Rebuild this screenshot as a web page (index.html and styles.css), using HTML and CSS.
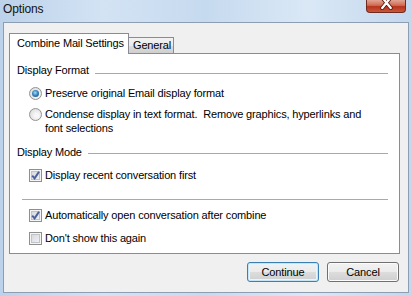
FILE: index.html
```html
<!DOCTYPE html>
<html lang="en">
<head>
  <meta charset="UTF-8" />
  <title>Options</title>
  <link rel="stylesheet" href="styles.css">
</head>
<body>
  <div class="window">
    <div class="titlebar">
      <span class="title">Options</span>
      <span class="close" title="Close">
        <svg width="40" height="13" viewBox="0 0 40 13" xmlns="http://www.w3.org/2000/svg">
          <path d="M16 -3L25 8M25 -3L16 8" stroke="#5a1a0e" stroke-width="4.2" stroke-linecap="round"/>
          <path d="M16 -3L25 8M25 -3L16 8" stroke="#ffffff" stroke-width="2.4" stroke-linecap="round"/>
        </svg>
      </span>
    </div>

    <div class="client">
      <div class="tabs">
        <div class="tab active">Combine Mail Settings</div>
        <div class="tab">General</div>
      </div>

      <div class="panel">
        <div class="group-head">
          <span>Display Format</span>
          <span class="rule"></span>
        </div>
        <label class="option gap-9">
          <span class="radio checked"><span class="dot"></span></span>
          <span>Preserve original Email display format</span>
        </label>
        <label class="option gap-7">
          <span class="radio"></span>
          <span>Condense display in text format.&nbsp; Remove graphics, hyperlinks and<br>font selections</span>
        </label>

        <div class="group-head gap-10">
          <span>Display Mode</span>
          <span class="rule"></span>
        </div>
        <label class="option gap-9">
          <span class="check">
            <svg width="11" height="11" viewBox="0 0 11 11"><path d="M2.2 5.6L4.6 8.4L9 1.8" fill="none" stroke="#4b5f9c" stroke-width="2"/></svg>
          </span>
          <span>Display recent conversation first</span>
        </label>

        <div class="separator"></div>

        <label class="option gap-8">
          <span class="check">
            <svg width="11" height="11" viewBox="0 0 11 11"><path d="M2.2 5.6L4.6 8.4L9 1.8" fill="none" stroke="#4b5f9c" stroke-width="2"/></svg>
          </span>
          <span>Automatically open conversation after combine</span>
        </label>
        <label class="option gap-9">
          <span class="check"></span>
          <span>Don't show this again</span>
        </label>
      </div>

      <div class="buttons">
        <button class="btn default">Continue</button>
        <button class="btn">Cancel</button>
      </div>
    </div>
  </div>
</body>
</html>
```

FILE: styles.css
```css
* {
  box-sizing: border-box;
  margin: 0;
  padding: 0;
}

body {
  font-family: 'Liberation Sans', Arial, sans-serif;
  font-size: 11px;
  letter-spacing: -0.15px;
  color: #000;
  background: #c4d8ee;
  white-space: nowrap;
}

.window {
  width: 411px;
  height: 296px;
  display: flex;
  flex-direction: column;
  background: linear-gradient(to right, #bcd2ea, #d3e3f4 25%, #c6daef 50%, #dae8f6 75%, #c3d7ed);
}

.titlebar {
  height: 22px;
  display: flex;
  justify-content: space-between;
  align-items: flex-start;
}

.title {
  padding: 2px 0 0 3px;
  font-size: 12px;
  line-height: 15px;
  color: #111;
}

.close {
  width: 40px;
  height: 13px;
  margin-right: 5px;
  display: flex;
  overflow: hidden;
  border: 1px solid #6e2a1e;
  border-top: none;
  border-radius: 0 0 4px 4px;
  background: linear-gradient(#e2a593, #cf6a52 45%, #b8331c 55%, #c8583a);
}

.client {
  height: 271px;
  margin: 0 2px 0 3px;
  border: 1px solid #8d9db2;
  background: #f0f0f0;
  padding: 10px 0 0 5px;
  display: flex;
  flex-direction: column;
}

/* tabs */
.tabs {
  display: flex;
  align-items: flex-end;
  margin-bottom: -1px;
}

.tab {
  position: relative;
  border: 1px solid #898c95;
  border-bottom: none;
}

.tab.active {
  z-index: 1;
  width: 120px;
  height: 21px;
  padding-left: 7px;
  line-height: 18px;
  background: #fff;
}

.tab:not(.active) {
  width: 46px;
  height: 16px;
  margin-left: -1px;
  margin-bottom: 1px;
  padding-left: 4px;
  line-height: 15px;
  background: linear-gradient(#f2f2f2, #ebebeb 50%, #dddddd 50%, #cfcfcf);
}

.panel {
  width: 391px;
  height: 201px;
  border: 1px solid #898c95;
  background: #fff;
  padding: 0 11px 0 7px;
  display: flex;
  flex-direction: column;
}

.group-head {
  display: flex;
  height: 14px;
  line-height: 14px;
  margin-top: 9px;
}

.group-head .rule {
  flex: 1;
  height: 1px;
  margin: 10px 0 0 6px;
  background: #a9a9a9;
}

.group-head.gap-10 { margin-top: 10px; }
.group-head.gap-10 .rule { margin-top: 8px; }

.option {
  display: flex;
  align-items: flex-start;
  gap: 3px;
  margin-left: 12px;
  line-height: 14px;
}

.gap-7 { margin-top: 7px; }
.gap-8 { margin-top: 8px; }
.gap-9 { margin-top: 9px; }

.radio {
  width: 13px;
  height: 13px;
  margin-top: 1px;
  flex-shrink: 0;
  border: 1px solid #929292;
  border-radius: 50%;
  background: radial-gradient(circle at 60% 60%, #f7f7f7 20%, #dcdcdc 80%, #cfcfcf);
  display: flex;
  align-items: center;
  justify-content: center;
}

.radio .dot {
  width: 7px;
  height: 7px;
  border-radius: 50%;
  background: radial-gradient(circle at 45% 40%, #a8def8, #3a87bf 45%, #184f86 90%);
}

.check {
  width: 13px;
  height: 13px;
  margin-top: 1px;
  flex-shrink: 0;
  border: 1px solid #8f8f8f;
  background: linear-gradient(135deg, #d2d4d8, #f6f6f7);
  box-shadow: inset 0 0 0 1px #f5f5f5, inset 0 0 0 2px #c0c3c8;
  display: flex;
  align-items: center;
  justify-content: center;
}

.separator {
  height: 1px;
  margin: 17px 0 0 5px;
  background: #a9a9a9;
}

/* buttons */
.buttons {
  display: flex;
  justify-content: flex-end;
  gap: 8px;
  margin: 8px 9px 0 0;
}

.btn {
  width: 72px;
  height: 20px;
  font-family: inherit;
  font-size: 11px;
  letter-spacing: inherit;
  color: #000;
  border: 1px solid #707070;
  border-radius: 3px;
  background: linear-gradient(#f2f2f2, #ebebeb 50%, #dddddd 50%, #cfcfcf);
  box-shadow: inset 0 0 0 1px #fbfbfb;
}

.btn.default {
  border-color: #3c7fb1;
  box-shadow: inset 0 0 0 1px #c4e5f7, inset 0 0 0 2px #e8f5fc;
}
```
